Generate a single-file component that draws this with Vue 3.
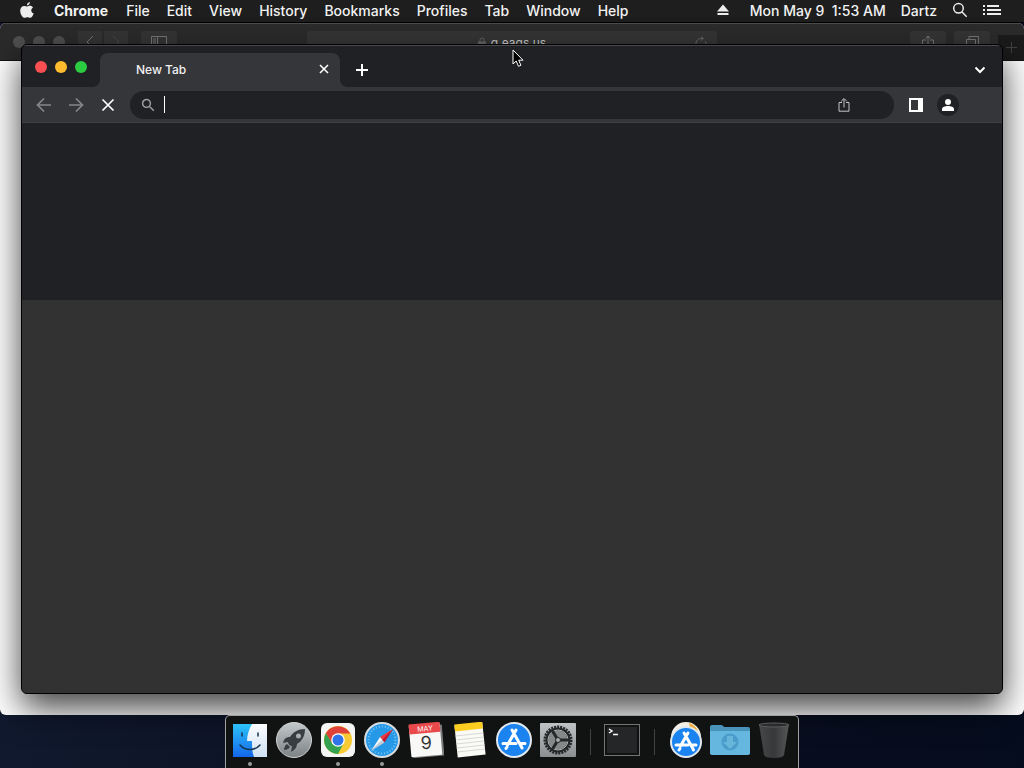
<template>
  <div class="desktop">
    <header class="menu-bar">
      <button class="apple" aria-label="Apple menu">
        <svg width="14" height="16" viewBox="0 0 14 16">
          <path d="M9.9 0C10 1.300 9 3.400 6.900 3.500 6.800 1.900 8.200.2 9.900 0zM7.200 4.500C8 4.500 8.700 3.800 10 3.800c1.200 0 2.300.6 3 1.600-2.600 1.500-2.200 5 .7 6.100-.7 2-2.100 4.300-3.600 4.300-1 0-1.500-.6-2.700-.6s-1.700.6-2.700.6C2.600 15.800.2 12 .2 8.700c0-3 1.900-4.800 3.900-4.800 1.300 0 2.200.6 3.100.6z" />
        </svg>
      </button>
      <nav class="menus">
        <button v-for="menu in menus" :key="menu" class="menu" :class="{ app: menu === 'Chrome' }">{{ menu }}</button>
      </nav>
      <div class="status">
        <svg class="eject" width="12" height="12" viewBox="0 0 12 12"><path d="M6 0.500L12 7.500H0zM.5 9h11v2H.5z" /></svg>
        <span class="clock">Mon May 9&nbsp; 1:53 AM</span>
        <span class="user">Dartz</span>
        <button class="status-button" aria-label="Spotlight">
          <svg width="16" height="16" viewBox="0 0 16 16"><path class="line" d="M6.500 1.500a4.800 4.800 0 1 0 0 9.600 4.800 4.800 0 0 0 0-9.600zM10 10l4.700 4.700" /></svg>
        </button>
        <button class="status-button" aria-label="Notification Center">
          <svg width="18" height="12" viewBox="0 0 18 12"><path d="M0 1h2v2H0zM0 5h2v2H0zM0 9h2v2H0zM4 1h12v2H4zM4 5h14v2H4zM4 9h14v2H4z" /></svg>
        </button>
      </div>
    </header>

    <main class="space">
      <section class="safari" aria-label="Safari">
        <div class="safari-toolbar">
          <div class="safari-left">
            <div class="lights dim"><i></i><i></i><i></i></div>
            <div class="safari-nav">
              <button aria-label="Back"><svg width="8" height="14" viewBox="0 0 8 14"><path d="M7 1L1 7l6 6" /></svg></button>
              <button class="faded" aria-label="Forward"><svg width="8" height="14" viewBox="0 0 8 14"><path d="M1 1l6 6-6 6" /></svg></button>
            </div>
            <button class="safari-wide" aria-label="Sidebar"><svg width="16" height="13" viewBox="0 0 16 13"><path d="M.5.5h15v12H.5zM6.500.5v12M2 3h3M2 5h3M2 7h3" /></svg></button>
          </div>
          <div class="safari-address">
            <svg width="8" height="11" viewBox="0 0 8 11"><path d="M2 5V3a2 2 0 0 1 4 0v2" /><path class="solid" d="M0 5h8v6H0z" /></svg>
            <span>g.eags.us</span>
            <button class="reload" aria-label="Reload"><svg width="12" height="13" viewBox="0 0 12 13"><path d="M10.500 5.500A5 5 0 1 1 6 2.500h2M6 .5l2.500 2L6 4.500" /></svg></button>
          </div>
          <div class="safari-right">
            <button class="safari-wide" aria-label="Share"><svg width="12" height="15" viewBox="0 0 12 15"><path d="M4 5H.5v9.500h11V5H8M6 10V1M3.500 3.500L6 1l2.500 2.500" /></svg></button>
            <button class="safari-wide" aria-label="Tabs"><svg width="13" height="13" viewBox="0 0 13 13"><path d="M.5 3.500h9v9h-9zM3 3V.5h9.500v9H10" /></svg></button>
            <button class="safari-plus" aria-label="New tab"><svg width="11" height="11" viewBox="0 0 11 11"><path d="M5.500 0v11M0 5.500h11" /></svg></button>
          </div>
        </div>
      </section>

      <section class="chrome" aria-label="Google Chrome">
        <div class="tab-strip">
          <div class="lights">
            <button class="red" aria-label="Close"></button>
            <button class="yellow" aria-label="Minimize"></button>
            <button class="green" aria-label="Zoom"></button>
          </div>
          <div class="tab">
            <span class="tab-title">New Tab</span>
            <button aria-label="Close tab"><svg width="10" height="10" viewBox="0 0 10 10"><path d="M1 1l8 8M9 1L1 9" /></svg></button>
          </div>
          <button class="new-tab" aria-label="New tab"><svg width="12" height="12" viewBox="0 0 12 12"><path d="M6 0v12M0 6h12" /></svg></button>
          <button class="tab-search" aria-label="Search tabs"><svg width="12" height="8" viewBox="0 0 12 8"><path d="M1.500 1.500L6 6l4.500-4.500" /></svg></button>
        </div>
        <div class="toolbar">
          <button class="tool muted" aria-label="Back"><svg width="16" height="16" viewBox="0 0 16 16"><path d="M15 8H2M8 1.500L1.500 8 8 14.500" /></svg></button>
          <button class="tool muted" aria-label="Forward"><svg width="16" height="16" viewBox="0 0 16 16"><path d="M1 8h13M8 1.500L14.500 8 8 14.500" /></svg></button>
          <button class="tool" aria-label="Stop"><svg width="14" height="14" viewBox="0 0 14 14"><path d="M1.500 1.500l11 11M12.500 1.500l-11 11" /></svg></button>
          <div class="omnibox">
            <svg class="magnifier" width="14" height="14" viewBox="0 0 14 14"><path d="M5.500 1.500a3.900 3.900 0 1 0 0 7.800 3.900 3.900 0 0 0 0-7.800zM8.300 8.300l4.500 4.500" /></svg>
            <span class="caret"></span>
            <input v-model="query" type="text" aria-label="Search or type a URL">
            <button class="share" aria-label="Share"><svg width="12" height="16" viewBox="0 0 12 16"><path d="M4 5.500H1v8.700h10V5.500H8M6 10.500V2M3.200 4.300L6 1.500l2.800 2.800" /></svg></button>
          </div>
          <button class="tool" aria-label="Side panel"><svg width="14" height="14" viewBox="0 0 14 14"><path class="fill" fill-rule="evenodd" d="M0 0h14v14H0zM2 2v10h7V2z" /></svg></button>
          <button class="tool" aria-label="Profile">
            <span class="avatar"><svg width="12" height="12" viewBox="0 0 12 12"><circle class="fill" cx="6" cy="3" r="3" /><path class="fill" d="M0 12v-2c0-2 3-3 6-3s6 1 6 3v2z" /></svg></span>
          </button>
        </div>
        <div class="page-top"></div>
        <div class="page"></div>
      </section>

      <svg class="pointer" width="12" height="19" viewBox="0 0 12 19">
        <path d="M1 1v14l3.200-3 2.300 5.300 2.400-1-2.200-5.100H11z" />
      </svg>

      <nav class="dock" aria-label="Dock">
        <button class="dock-item running" aria-label="Finder">
          <svg viewBox="0 0 36 36">
            <defs>
              <linearGradient id="finder" x2="0" y2="1"><stop stop-color="#2cc3fa" /><stop offset="1" stop-color="#1466ea" /></linearGradient>
              <linearGradient id="finder-light" x2="0" y2="1"><stop stop-color="#fafcfe" /><stop offset="1" stop-color="#cfe3f5" /></linearGradient>
            </defs>
            <path fill="url(#finder)" d="M1 2h34v33H1z" />
            <path fill="url(#finder-light)" d="M20 2c-3 5-5 11-5 17h5c0 6 0 11 2 16h13V2z" />
            <path class="face" d="M10 11v3M26 11v3M8 23c5 6 15 6 20 0" />
          </svg>
        </button>
        <button class="dock-item" aria-label="Launchpad">
          <svg viewBox="0 0 36 36">
            <defs><linearGradient id="metal" x2="0" y2="1"><stop stop-color="#c3c8ca" /><stop offset="1" stop-color="#7d8284" /></linearGradient></defs>
            <circle cx="18" cy="18" r="17.500" fill="url(#metal)" stroke="#d0d3d4" />
            <path fill="#373d40" fill-rule="evenodd" d="M29 7c-7 0-12 3-15 8-4 0-6 2-7 6l5-1c0 2 2 4 4 4l-1 6c4-2 6-5 6-8 5-3 8-8 8-15zm-6.500 4.500a2.500 2.500 0 1 1 0 5 2.500 2.500 0 0 1 0-5z" />
            <path fill="#373d40" d="M11 22l3 3c-1 2-4 3-6 3 0-2 1-5 3-6z" />
          </svg>
        </button>
        <button class="dock-item running" aria-label="Chrome">
          <svg viewBox="0 0 36 36">
            <rect x="1" y="1" width="34" height="34" rx="6" fill="#f5f5f3" />
            <circle cx="18" cy="18" r="14" fill="#f8cb35" />
            <path fill="#35a252" d="M12.400 21.300L5.900 11A14 14 0 0 0 18 32l5.700-10.800z" />
            <path fill="#de4238" d="M5.900 11l6.300 10.500L18 11.500h12.400L30 11a14 14 0 0 0-24.100 0z" />
            <circle cx="18" cy="18" r="6.800" fill="#fff" /><circle cx="18" cy="18" r="5.500" fill="#2f74e9" />
          </svg>
        </button>
        <button class="dock-item running" aria-label="Safari">
          <svg viewBox="0 0 36 36">
            <circle cx="18" cy="18" r="17" fill="#2698e8" stroke="#d5dce0" stroke-width="2" />
            <circle class="ticks" cx="18" cy="18" r="13.500" />
            <path fill="#f03a3d" d="M29 7L16 15l4 5z" /><path fill="#b91c35" d="M29 7l-8.500 13.500L18 18z" />
            <path fill="#f3f6f7" d="M7 29l9-14 2.500 3z" /><path fill="#c6ccd1" d="M7 29l11.500-11 2 2.500z" />
          </svg>
        </button>
        <button class="dock-item" aria-label="Calendar">
          <svg viewBox="0 0 36 36">
            <g transform="rotate(-5 18 18)">
              <path fill="#7c7c7c" d="M2 4h33v31H4z" /><rect x="2" y="2" width="31" height="32" rx="1" fill="#f8f8f6" />
              <path fill="#e9494b" d="M2 1h31v10H2z" />
              <text class="month" x="18" y="9">MAY</text><text class="day" x="18" y="27">9</text>
            </g>
          </svg>
        </button>
        <button class="dock-item" aria-label="Notes">
          <svg viewBox="0 0 36 36">
            <g transform="rotate(-6 18 18)">
              <path fill="#fafaf6" d="M4 2h28v32H4z" /><path fill="#fccd21" d="M4 1h28v7H4z" />
              <path class="rules" d="M4 12.500h28M4 16.500h28M4 20.500h28M4 24.500h28M4 28.500h28" />
            </g>
          </svg>
        </button>
        <button class="dock-item" aria-label="App Store">
          <svg viewBox="0 0 36 36">
            <circle cx="18" cy="18" r="17" fill="#1a83ef" stroke="#e1e9ef" stroke-width="2" />
            <path class="store" d="M16 8l9 16M20 8l-8.500 15M7 21.500h13M25 21.500h4M26 26l-1-2M10 26.500l1-1.500" />
          </svg>
        </button>
        <button class="dock-item" aria-label="System Preferences">
          <svg viewBox="0 0 36 36">
            <defs><linearGradient id="plate" x2="0" y2="1"><stop stop-color="#bfc3c5" /><stop offset="1" stop-color="#8b8f91" /></linearGradient></defs>
            <rect y="1" width="36" height="34" rx="1" fill="url(#plate)" />
            <circle class="teeth" cx="18" cy="18" r="13" />
            <circle cx="18" cy="18" r="11" fill="#85898a" stroke="#252829" stroke-width="3" />
            <circle cx="18" cy="18" r="10" fill="none" stroke="#b4b7b8" />
            <path class="spokes" d="M18 18h11M18 18l-5.500-9M18 18l-5.500 9" />
            <circle cx="18" cy="18" r="2.500" fill="#a7abad" stroke="#252829" />
          </svg>
        </button>
        <span class="separator"></span>
        <button class="dock-item" aria-label="Terminal">
          <svg viewBox="0 0 36 36">
            <rect x=".5" y="2.500" width="35" height="31" fill="#111" stroke="#747474" />
            <rect x="3" y="5" width="30" height="26" fill="#252627" />
            <path class="prompt" d="M5 7l3 2-3 2M9 12.500h5" />
          </svg>
        </button>
        <span class="separator"></span>
        <button class="dock-item" aria-label="Applications">
          <svg viewBox="0 0 36 36">
            <circle cx="18" cy="15" r="15" fill="#f5efe5" /><path fill="#edaf3d" d="M21 1a14 14 0 0 1 9 8l-8-3z" />
            <circle cx="18" cy="20" r="15" fill="#1a83ef" stroke="#e1e9ef" stroke-width="2" />
            <path class="store" d="M16 11l8 14M20 11l-7.500 13M8 23h12M24.500 23H28M25.500 28l-1-2M11 28l1-1.500" />
          </svg>
        </button>
        <button class="dock-item" aria-label="Downloads">
          <svg class="folder" viewBox="0 0 40 36">
            <path fill="#4993bb" d="M0 5q0-2 2-2h9q2 0 3 2h24q2 0 2 2v25H0z" /><path fill="#66b7df" d="M0 9h40v22q0 2-2 2H2q-2 0-2-2z" />
            <circle cx="20" cy="20" r="8.500" fill="#4b9cca" /><path fill="#69b6dc" d="M17 14h6v6h4l-7 7-7-7h4z" />
          </svg>
        </button>
        <button class="dock-item" aria-label="Trash">
          <svg viewBox="0 0 36 36">
            <defs><linearGradient id="bin"><stop stop-color="#454748" /><stop offset=".5" stop-color="#363839" /><stop offset="1" stop-color="#555758" /></linearGradient></defs>
            <path fill="url(#bin)" d="M3 2h30l-5 31q-1 3-10 3T8 33z" />
            <ellipse cx="18" cy="3" rx="15" ry="2" fill="#292b2c" stroke="#5b5d5e" />
          </svg>
        </button>
      </nav>
    </main>
  </div>
</template>

<script setup>
import { ref } from 'vue'

const query = ref('')
const menus = ['Chrome', 'File', 'Edit', 'View', 'History', 'Bookmarks', 'Profiles', 'Tab', 'Window', 'Help']
</script>

<style>
body {
  margin: 0;
  background: #0a1124;
}
</style>

<style scoped>
.desktop {
  display: flex;
  flex-direction: column;
  height: 100vh;
  overflow: hidden;
  color: #f2f2f2;
  font-family: Inter, "Liberation Sans", sans-serif;
  font-size: 14px;
  background: linear-gradient(90deg, #10192e, #0c1022 45%, #050c1d);
}

button {
  display: flex;
  align-items: center;
  justify-content: center;
  padding: 0;
  border: 0;
  color: inherit;
  font: inherit;
  background: none;
}

svg {
  display: block;
  flex: none;
}

/* line icons by default, paths with their own fill are left alone */
path:where(:not([fill])) {
  fill: none;
  stroke: currentColor;
}

.menu-bar {
  display: flex;
  align-items: center;
  height: 20px;
  padding: 0 23px 2px 20px;
  font-weight: 500;
  background: #1e1e1e;
  border-bottom: 1px solid #000;
}

.menu-bar path {
  fill: #ededed;
  stroke: none;
}

.menu-bar .line {
  fill: none;
  stroke: #ededed;
  stroke-width: 1.5;
}

.menus {
  display: flex;
  gap: 17px;
  margin-left: 20px;
}

.menu.app {
  margin-right: 1px;
  font-weight: 700;
}

.status {
  display: flex;
  align-items: center;
  gap: 15px;
  margin-left: auto;
  white-space: nowrap;
}

.eject {
  margin-right: 6px;
}

.space {
  position: relative;
  flex: 1;
}

.safari {
  position: absolute;
  inset: 0 0 53px;
  overflow: hidden;
  border-radius: 6px;
  background: #fff;
}

.safari-toolbar {
  display: grid;
  grid-template-columns: 3fr 4fr 3fr;
  align-items: start;
  height: 36px;
  color: #777;
  background: #2b2b2b;
  border-top: 1px solid #4c4c4c;
  border-bottom: 1px solid #111;
}

.safari-toolbar button,
.safari-address {
  height: 22px;
  background: #353535;
}

.safari-left,
.safari-right {
  display: flex;
  padding-top: 7px;
}

.safari-left {
  gap: 13px;
  padding-left: 13px;
}

.safari-nav {
  display: flex;
  gap: 2px;
}

.safari-nav button {
  width: 24px;
}

.safari-nav .faded {
  color: #484848;
}

.safari-wide {
  width: 36px;
  border-radius: 3px;
}

.safari-address {
  display: flex;
  align-items: center;
  justify-content: center;
  gap: 5px;
  margin-top: 7px;
  color: #646464;
  font-size: 12px;
  border-radius: 4px;
}

.safari-address span {
  color: #c8c8c8;
}

.safari-address .solid {
  fill: currentColor;
}

.safari-address .reload {
  position: absolute;
  right: 31%;
  background: none;
}

.safari-right {
  justify-content: flex-end;
  gap: 8px;
}

.safari-toolbar .safari-plus {
  width: 26px;
  height: 25px;
  margin-top: 4px;
  color: #424242;
  background: #1b1b1b;
}

.lights {
  display: flex;
  align-items: center;
  gap: 8px;
}

.lights i,
.lights button {
  width: 12px;
  height: 12px;
  border-radius: 50%;
}

.lights i {
  background: #505050;
}

.lights .red { background: #f94f53; }
.lights .yellow { background: #fcbc2e; }
.lights .green { background: #2bcb42; }

.chrome {
  position: absolute;
  inset: 21px 21px 74px;
  display: flex;
  flex-direction: column;
  overflow: hidden;
  border: 1px solid #000;
  border-radius: 6px;
  background: #202124;
  box-shadow: 0 14px 34px rgba(0, 0, 0, 0.75);
}

.tab-strip {
  display: flex;
  align-items: center;
  height: 41px;
  padding: 0 16px 0 13px;
  border-top: 1px solid #47494b;
}

.tab {
  position: relative;
  display: flex;
  align-items: center;
  justify-content: space-between;
  align-self: flex-end;
  width: 240px;
  height: 34px;
  margin-left: 13px;
  padding: 0 11px 2px 36px;
  box-sizing: border-box;
  border-radius: 8px 8px 0 0;
  background: #35363a;
}

/* flared feet of the active tab */
.tab::before,
.tab::after {
  content: "";
  position: absolute;
  bottom: 0;
  width: 8px;
  height: 8px;
}

.tab::before {
  right: 100%;
  background: radial-gradient(circle at 0 0, transparent 8px, #35363a 8px);
}

.tab::after {
  left: 100%;
  background: radial-gradient(circle at 100% 0, transparent 8px, #35363a 8px);
}

.tab-title {
  color: #f1f1f2;
  font-size: 12px;
  font-weight: 500;
}

.tab path,
.new-tab path,
.tab-search path {
  stroke: #fff;
  stroke-width: 2;
}

.tab path {
  stroke-width: 1.6;
}

.new-tab {
  margin-top: 7px;
  margin-left: 16px;
}

.tab-search {
  margin-top: 7px;
  margin-left: auto;
}

.toolbar {
  display: flex;
  align-items: center;
  height: 36px;
  padding: 0 38px 0 6px;
  background: #35363a;
  border-bottom: 1px solid #3d3e42;
  box-sizing: border-box;
}

.tool {
  flex: none;
  width: 32px;
  height: 28px;
  color: #fff;
}

.tool path {
  stroke-width: 1.7;
}

.muted {
  color: #85868a;
}

.toolbar .fill {
  fill: #fff;
  stroke: none;
}

.omnibox {
  display: flex;
  flex: 1;
  align-items: center;
  height: 28px;
  margin: 0 6px;
  padding: 0 44px 0 11px;
  border-radius: 14px;
  background: #202124;
}

.magnifier {
  color: #9c9da0;
}

.magnifier path {
  stroke-width: 1.5;
}

.caret {
  width: 1px;
  height: 17px;
  margin-left: 9px;
  background: #fff;
}

.omnibox input {
  flex: 1;
  min-width: 0;
  padding: 0;
  border: 0;
  outline: 0;
  color: #fff;
  font: inherit;
  background: none;
}

.share {
  color: #c3c4c6;
}

.avatar {
  display: grid;
  place-items: center;
  width: 22px;
  height: 22px;
  border-radius: 50%;
  background: #202124;
}

.page-top {
  flex: 31;
  background: #202124;
}

.page {
  flex: 69;
  background: #323232;
}

.pointer {
  position: absolute;
  top: 26px;
  left: 512px;
}

.pointer path {
  fill: #000;
  stroke: #fff;
}

.dock {
  position: absolute;
  bottom: 0;
  left: 50%;
  display: flex;
  height: 52px;
  padding: 0 2px;
  border: 1px solid #a0a0a0;
  border-bottom: 0;
  border-radius: 5px 5px 0 0;
  background: #111212;
  transform: translateX(-50%);
}

.dock-item {
  flex-direction: column;
  justify-content: flex-start;
  width: 44px;
  padding-top: 6px;
}

.dock-item svg {
  width: 36px;
  height: 36px;
}

.dock-item .folder {
  width: 40px;
}

.dock path {
  stroke: none;
}

.dock-item.running::after {
  content: "";
  width: 4px;
  height: 4px;
  margin-top: 4px;
  border-radius: 50%;
  background: #9a9a9a;
}

.separator {
  width: 1px;
  height: 26px;
  margin: 13px 9px 0 10px;
  background: #414242;
}

.dock .face {
  stroke: #15344f;
  stroke-width: 1.5;
  stroke-linecap: round;
}

.ticks {
  fill: none;
  stroke: #78c6f2;
  stroke-width: 2;
  stroke-dasharray: 1 2;
}

.month {
  fill: #fff;
  font-size: 7px;
  text-anchor: middle;
}

.day {
  fill: #333;
  font-size: 18px;
  text-anchor: middle;
}

.dock .rules {
  stroke: #d8d8d5;
}

.dock .store {
  stroke: #fff;
  stroke-width: 3;
  stroke-linecap: round;
}

.teeth {
  fill: none;
  stroke: #252829;
  stroke-width: 3;
  stroke-dasharray: 2 1;
}

.dock .spokes {
  stroke: #252829;
  stroke-width: 3;
}

.dock .prompt {
  stroke: #fff;
  stroke-width: 1.5;
}
</style>
